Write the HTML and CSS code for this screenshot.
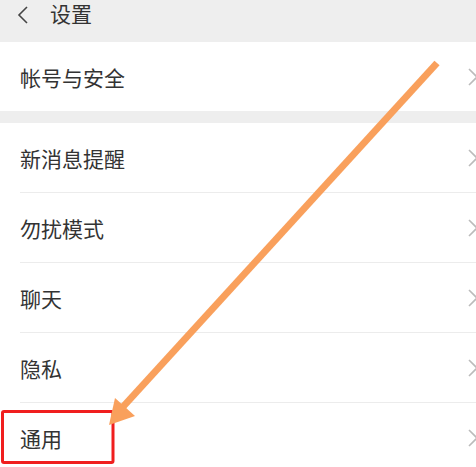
FILE: index.html
```html
<!DOCTYPE html>
<html>
<head>
  <meta charset="utf-8">
  <title>设置</title>
  <link rel="stylesheet" href="styles.css">
</head>
<body>
  <div class="page">
    <div class="header">
      <svg class="back" width="14" height="18" viewBox="0 0 14 18">
        <path d="M11 1 L3 9 L11 17" fill="none" stroke="#444" stroke-width="1.6"/>
      </svg>
      <span class="title">设置</span>
    </div>

    <div class="group">
      <div class="row">
        <span>帐号与安全</span>
        <svg class="arrow-right" width="9" height="18" viewBox="0 0 9 18"><path d="M1 1 L9 9 L1 17" fill="none" stroke="#bbb" stroke-width="1.6"/></svg>
      </div>
    </div>

    <div class="group">
      <div class="row">
        <span>新消息提醒</span>
        <svg class="arrow-right" width="9" height="18" viewBox="0 0 9 18"><path d="M1 1 L9 9 L1 17" fill="none" stroke="#bbb" stroke-width="1.6"/></svg>
      </div>
      <div class="row">
        <span>勿扰模式</span>
        <svg class="arrow-right" width="9" height="18" viewBox="0 0 9 18"><path d="M1 1 L9 9 L1 17" fill="none" stroke="#bbb" stroke-width="1.6"/></svg>
      </div>
      <div class="row">
        <span>聊天</span>
        <svg class="arrow-right" width="9" height="18" viewBox="0 0 9 18"><path d="M1 1 L9 9 L1 17" fill="none" stroke="#bbb" stroke-width="1.6"/></svg>
      </div>
      <div class="row">
        <span>隐私</span>
        <svg class="arrow-right" width="9" height="18" viewBox="0 0 9 18"><path d="M1 1 L9 9 L1 17" fill="none" stroke="#bbb" stroke-width="1.6"/></svg>
      </div>
      <div class="row">
        <span>通用</span>
        <svg class="arrow-right" width="9" height="18" viewBox="0 0 9 18"><path d="M1 1 L9 9 L1 17" fill="none" stroke="#bbb" stroke-width="1.6"/></svg>
      </div>
    </div>

    <!-- annotation drawn over the screenshot -->
    <svg class="overlay" width="476" height="467" viewBox="0 0 476 467">
      <rect x="2.5" y="411.5" width="110.5" height="51" rx="1.5" fill="none" stroke="#f01e1e" stroke-width="3"/>
      <line x1="437" y1="63" x2="121" y2="409" stroke="#f9a05c" stroke-width="7"/>
      <polygon points="109,425 135,416 115,398" fill="#f9a05c"/>
    </svg>
  </div>
</body>
</html>
```

FILE: styles.css
```css
body {
  margin: 0;
  background-color: #eeeeee;
  font-family: "Noto Sans CJK SC", "Noto Sans", sans-serif;
  color: #333;
  overflow: hidden;
}

.page {
  position: relative;
  width: 476px;
  height: 467px;
  overflow: hidden;
}

.header {
  height: 42px;
  display: flex;
  align-items: flex-start;
  padding-left: 16px;
  background-color: #eeeeee;
}

.back {
  margin-top: 6px;
}

.title {
  margin-left: 20px;
  font-size: 21px;
  line-height: 26px;
}

.group {
  background: #ffffff;
  margin-bottom: 12px;
}

.row {
  height: 69px;
  margin-left: 20px;
  display: flex;
  align-items: center;
  justify-content: space-between;
  font-size: 21px;
}

.row + .row {
  border-top: 1px solid #ececec;
}

.arrow-right {
  margin-right: -1px;
}

.overlay {
  position: absolute;
  left: 0;
  top: 0;
}
```
